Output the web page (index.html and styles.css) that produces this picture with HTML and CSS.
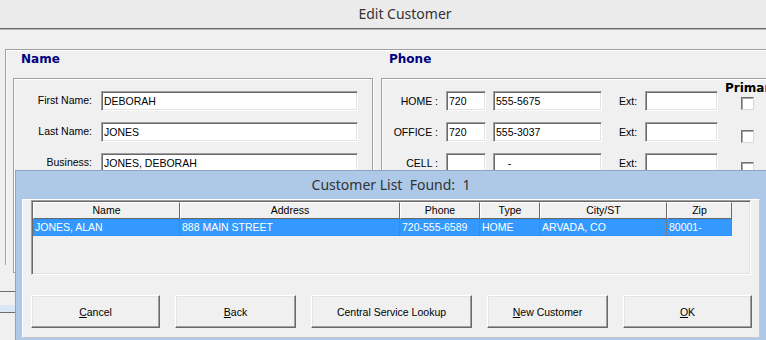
FILE: index.html
```html
<!DOCTYPE html>
<html>
<head>
<meta charset="utf-8">
<title>Edit Customer</title>
<link rel="stylesheet" href="styles.css">
</head>
<body>
<div class="window">
  <div class="titlebar">Edit Customer</div>
  <div class="content">
    <div class="group">
      <div class="col">
        <div class="group-title">Name</div>
        <div class="box name-box">
          <div class="frow"><label>First Name:</label><div class="input wide">DEBORAH</div></div>
          <div class="frow"><label>Last Name:</label><div class="input wide">JONES</div></div>
          <div class="frow third"><label>Business:</label><div class="input wide">JONES, DEBORAH</div></div>
        </div>
      </div>
      <div class="col">
        <div class="group-title">Phone</div>
        <div class="box phone-box">
          <div class="prows">
            <div class="prow"><label>HOME :</label><div class="input area">720</div><div class="input num">555-5675</div><span class="ext">Ext:</span><div class="input extin"></div></div>
            <div class="prow"><label>OFFICE :</label><div class="input area">720</div><div class="input num">555-3037</div><span class="ext">Ext:</span><div class="input extin"></div></div>
            <div class="prow third"><label>CELL :</label><div class="input area"></div><div class="input num">    -</div><span class="ext">Ext:</span><div class="input extin"></div></div>
          </div>
          <div class="primary">
            <div class="primary-title">Primary</div>
            <div class="check c1"></div>
            <div class="check c2"></div>
            <div class="check c3"></div>
          </div>
        </div>
      </div>
    </div>
    <div class="statusarea"><div class="band"></div></div>
  </div>
</div>

<div class="dialog">
  <div class="dlg-title">Customer List  Found:  1</div>
  <div class="dlg-client">
    <div class="listview">
      <div class="lv-head">
        <div class="th h1">Name</div>
        <div class="th h2">Address</div>
        <div class="th h3">Phone</div>
        <div class="th h4">Type</div>
        <div class="th h5">City/ST</div>
        <div class="th h6">Zip</div>
      </div>
      <div class="lv-row">
        <div class="td d1">JONES, ALAN</div>
        <div class="td d2">888 MAIN STREET</div>
        <div class="td d3">720-555-6589</div>
        <div class="td d4">HOME</div>
        <div class="td d5">ARVADA, CO</div>
        <div class="td d6">80001-</div>
      </div>
    </div>
    <div class="buttons">
      <button class="btn b-cancel"><u>C</u>ancel</button>
      <button class="btn b-back"><u>B</u>ack</button>
      <button class="btn b-central">Central Service Lookup</button>
      <button class="btn b-new"><u>N</u>ew Customer</button>
      <button class="btn b-ok"><u>O</u>K</button>
    </div>
  </div>
</div>
</body>
</html>
```
FILE: styles.css
```css
* { box-sizing: border-box; }
html, body { margin: 0; padding: 0; }
body {
  width: 766px;
  height: 340px;
  overflow: hidden;
  position: relative;
  background: #f0f0f0;
  font-family: "Liberation Sans", Arial, sans-serif;
  font-size: 10.5px;
  color: #000;
}
.window { width: 810px; }
.titlebar {
  height: 29px;
  line-height: 28px;
  text-align: center;
  background: #ebebeb;
  border-bottom: 1px solid #6b6b6b;
  box-shadow: 0 1px 0 #b4b4b4;
  font-family: "Noto Sans", sans-serif;
  font-size: 14px;
  color: #333;
}
.content { padding-top: 20px; }
.group {
  margin-left: 5px;
  height: 216px;
  border: 1px solid #a0a0a0;
  border-bottom: none;
  box-shadow: inset 1px 1px 0 #fff;
  display: flex;
  gap: 8px;
  padding-left: 7px;
}
.group-title {
  height: 28px;
  line-height: 18px;
  padding-left: 8px;
  font-family: "DejaVu Sans", sans-serif;
  font-weight: bold;
  font-size: 12px;
  color: #000080;
}
.box {
  border: 1px solid #a0a0a0;
  box-shadow: inset 1px 1px 0 #fff, 1px 1px 0 #fff;
  height: 195px;
  padding-top: 12px;
}
.name-box { width: 360px; }
.frow, .prow {
  display: flex;
  align-items: center;
  height: 20px;
  margin-bottom: 11px;
}
.third { margin-top: 2px; }
.frow label {
  width: 78px;
  text-align: right;
  margin-right: 9px;
  margin-bottom: 2px;
}
.input {
  height: 20px;
  background: #fff;
  border: 1px solid;
  border-color: #a0a0a0 #fff #fff #a0a0a0;
  box-shadow: inset 1px 1px 0 #696969, inset -1px -1px 0 #e3e3e3;
  padding-left: 2px;
  line-height: 18px;
  white-space: pre;
  overflow: hidden;
}
.wide { width: 257px; }
.phone-box { width: 470px; display: flex; }
.prow label {
  width: 56px;
  text-align: right;
  margin-right: 8px;
}
.area { width: 40px; margin-right: 7px; }
.num { width: 109px; }
.ext { width: 19px; margin-left: 17px; margin-right: 7px; }
.extin { width: 73px; }
.primary { margin-left: 7px; margin-top: -10px; }
.primary-title {
  height: 14px;
  line-height: 14px;
  font-family: "DejaVu Sans", sans-serif;
  font-weight: bold;
  font-size: 12px;
  white-space: nowrap;
}
.check {
  width: 13px;
  height: 13px;
  margin-left: 16px;
  background: #fff;
  border: 1px solid;
  border-color: #707070 #d8d8d8 #d8d8d8 #707070;
  box-shadow: inset 1px 1px 0 #a8a8a8;
}
.c1 { margin-top: 2px; }
.c2 { margin-top: 20px; }
.c3 { margin-top: 19px; }
.statusarea {
  margin-top: 26px;
  border-top: 1px solid #6d6d6d;
  padding-top: 13px;
}
.band {
  height: 8px;
  background: #dae6f4;
  border-bottom: 1px solid #6d6d6d;
}

/* Dialog */
.dialog {
  position: absolute;
  left: 15px;
  top: 170px;
  width: 752px;
  height: 175px;
  border: 1px solid #8aa6c6;
  background: #adc9e7;
  padding: 0 6px;
}
.dlg-title {
  height: 28px;
  line-height: 28px;
  text-align: center;
  font-family: "Noto Sans", sans-serif;
  font-size: 14px;
  color: #333;
  white-space: pre;
}
.dlg-client {
  height: 139px;
  background: #f0f0f0;
  border: 1px solid;
  border-color: #fff #c8c8c8 #c8c8c8 #fff;
  padding-left: 8px;
}
.listview {
  width: 720px;
  height: 75px;
  border: 1px solid;
  border-color: #a0a0a0 #fff #fff #a0a0a0;
  box-shadow: inset 1px 1px 0 #696969, inset -1px -1px 0 #e3e3e3;
  padding: 1px 0 0 1px;
  background: #f0f0f0;
}
.lv-head { display: flex; height: 17px; }
.th {
  height: 17px;
  border: 1px solid;
  border-color: #fff #696969 #696969 #fff;
  text-align: center;
  line-height: 15px;
  background: #f0f0f0;
  white-space: nowrap;
}
.h1 { width: 147px; }
.h2 { width: 220px; }
.h3 { width: 80px; }
.h4 { width: 60px; }
.h5 { width: 127px; }
.h6 { width: 65px; }
.lv-row {
  display: flex;
  width: 699px;
  height: 17px;
  background: #3399ff;
  color: #fff;
  border: 1px dotted #cc6600;
}
.td {
  height: 15px;
  line-height: 15px;
  padding-left: 2px;
  border-right: 1px dotted #b0672a;
  white-space: nowrap;
  overflow: hidden;
}
.d1 { width: 146px; padding-left: 1px; }
.d2 { width: 220px; }
.d3 { width: 80px; }
.d4 { width: 60px; }
.d5 { width: 127px; }
.d6 { width: 64px; border-right: none; }
.buttons {
  display: flex;
  gap: 15px;
  margin-top: 20px;
}
.btn {
  height: 33px;
  padding: 0;
  margin: 0;
  border: 1px solid;
  border-color: #fff #696969 #696969 #fff;
  box-shadow: inset -1px -1px 0 #a0a0a0, inset 1px 1px 0 #e3e3e3;
  background: #f0f0f0;
  font-family: "Liberation Sans", Arial, sans-serif;
  font-size: 10.5px;
  color: #000;
}
.b-cancel { width: 129px; }
.b-back { width: 121px; }
.b-central { width: 161px; }
.b-new { width: 121px; }
.b-ok { width: 129px; }
```
